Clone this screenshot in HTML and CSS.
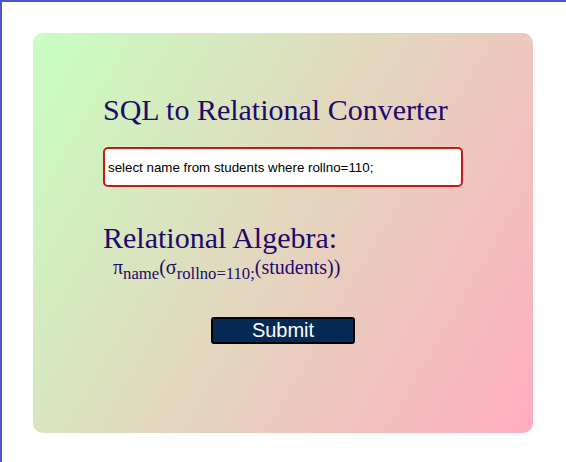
FILE: index.html
```html
<!DOCTYPE html>
<html lang="en">
<head>
<meta charset="utf-8">
<title>SQL to Relational Converter</title>
<link rel="stylesheet" href="styles.css">
</head>
<body>
<main class="card">
  <label class="title" for="query">SQL to Relational Converter</label>
  <input class="query" id="query" type="text" value="select name from students where rollno=110;">
  <div class="title result-title">Relational Algebra:</div>
  <div class="result">π<sub>name</sub>(σ<sub>rollno=110;</sub>(students))</div>
  <button class="submit" type="button">Submit</button>
</main>
</body>
</html>
```

FILE: styles.css
```css
* {
  box-sizing: border-box;
}

body {
  margin: 0;
  height: 462px;
  padding: 31px;
  border-top: 2px solid #4a57cc;
  border-left: 2px solid #4a57cc;
  background: #fff;
  overflow: hidden;
}

.card {
  display: flex;
  flex-direction: column;
  width: 500px;
  height: 400px;
  padding: 60px 70px 0;
  border-radius: 10px;
  background: linear-gradient(120deg, #c7ffc0, #ffadbd);
  color: #22096a;
  font-family: "Liberation Serif", "Times New Roman", serif;
}

.title {
  font-size: 30px;
  line-height: 34px;
}

.query {
  width: 360px;
  height: 40px;
  margin-top: 20px;
  padding: 1px 2px 1px 3px;
  border: 2px solid #c81818;
  border-radius: 5px;
  background: #fff;
  color: #000;
  font: 13.333px "Liberation Sans", Arial, sans-serif;
  outline: none;
}

.result-title {
  margin-top: 34px;
}

.result {
  height: 26px;
  padding-top: 1px;
  margin-left: 10px;
  font-size: 20px;
  line-height: 23px;
}

.result sub {
  font-size: 16.667px;
}

.submit {
  align-self: center;
  width: 144px;
  height: 27px;
  margin-top: 36px;
  padding: 0;
  border: 2px solid #000;
  border-radius: 3px;
  background: #062a56;
  color: #fff;
  font: 20px/23px "Liberation Sans", Arial, sans-serif;
}
```
